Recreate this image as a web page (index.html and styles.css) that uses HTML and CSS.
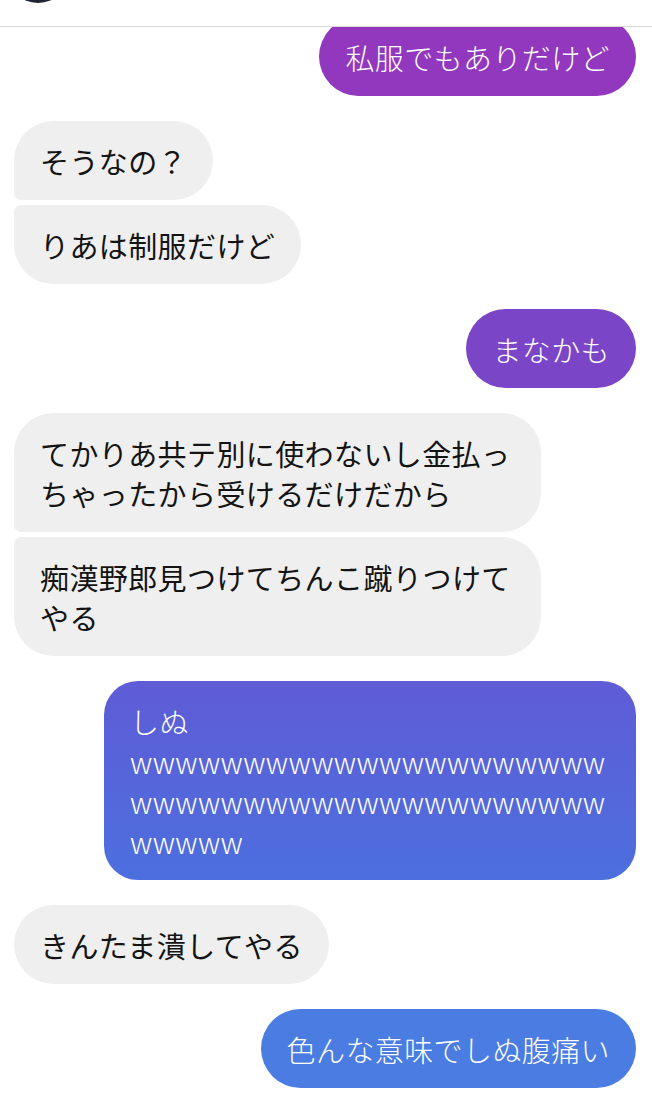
FILE: index.html
```html
<!DOCTYPE html>
<html lang="ja">
<head>
<meta charset="utf-8">
<title>Chat</title>
<link rel="stylesheet" href="styles.css">
</head>
<body>
<header class="header">
  <div class="avatar"></div>
</header>
<main class="chat">
  <div class="group out">
    <div class="msg out single purple1">私服でもありだけど</div>
  </div>
  <div class="group in">
    <div class="msg in first">そうなの？</div>
    <div class="msg in last">りあは制服だけど</div>
  </div>
  <div class="group out">
    <div class="msg out single purple2">まなかも</div>
  </div>
  <div class="group in">
    <div class="msg in first wide">てかりあ共テ別に使わないし金払っちゃったから受けるだけだから</div>
    <div class="msg in last wide">痴漢野郎見つけてちんこ蹴りつけてやる</div>
  </div>
  <div class="group out">
    <div class="msg out single indigo wrapw">しぬwwwwwwwwwwwwwwwwwwwwwwwwwwwwwwwwwwwwwwwwwwwwwww</div>
  </div>
  <div class="group in">
    <div class="msg in single">きんたま潰してやる</div>
  </div>
  <div class="group out">
    <div class="msg out single blue">色んな意味でしぬ腹痛い</div>
  </div>
</main>
</body>
</html>
```
FILE: styles.css
```css
* { box-sizing: border-box; }

html, body {
  margin: 0;
  padding: 0;
  background: #ffffff;
}

body {
  font-family: "Noto Sans CJK JP", "Noto Sans", sans-serif;
  width: 652px;
  height: 1105px;
  overflow: hidden;
}

.header {
  position: relative;
  z-index: 2;
  height: 27px;
  background: #ffffff;
  border-bottom: 1px solid #d9d9d9;
  overflow: hidden;
}

.avatar {
  position: absolute;
  left: 6px;
  top: -61px;
  width: 64px;
  height: 64px;
  border-radius: 50%;
  background: #1d2435;
}

.chat {
  display: flex;
  flex-direction: column;
  gap: 25px;
  margin-top: -10px;
  padding: 0 16px 0 14px;
}

.group {
  display: flex;
  flex-direction: column;
  gap: 5px;
}

.group.in { align-items: flex-start; }
.group.out { align-items: flex-end; }

.msg {
  font-size: 29px;
  letter-spacing: 0.4px;
  line-height: 40px;
  padding: 20px 26px 19px 26px;
  border-radius: 39.5px;
  max-width: 532px;
  white-space: normal;
}

.msg.in {
  background: #efefef;
  color: #141414;
}

.msg.in.first { border-bottom-left-radius: 7px; }
.msg.in.last { border-top-left-radius: 7px; }

.msg.wide { width: 527px; }

.msg.out {
  color: #ffffff;
  font-weight: 300;
}

.purple1 { background: #9138be; }
.purple2 { background: #7b45c8; }
.indigo {
  background: linear-gradient(180deg, #5f5cd6 0%, #4c6fde 100%);
  border-radius: 34px;
  width: 532px;
}
.blue { background: #4a7ce1; }

.wrapw {
  overflow-wrap: break-word;
  word-break: normal;
}
```
